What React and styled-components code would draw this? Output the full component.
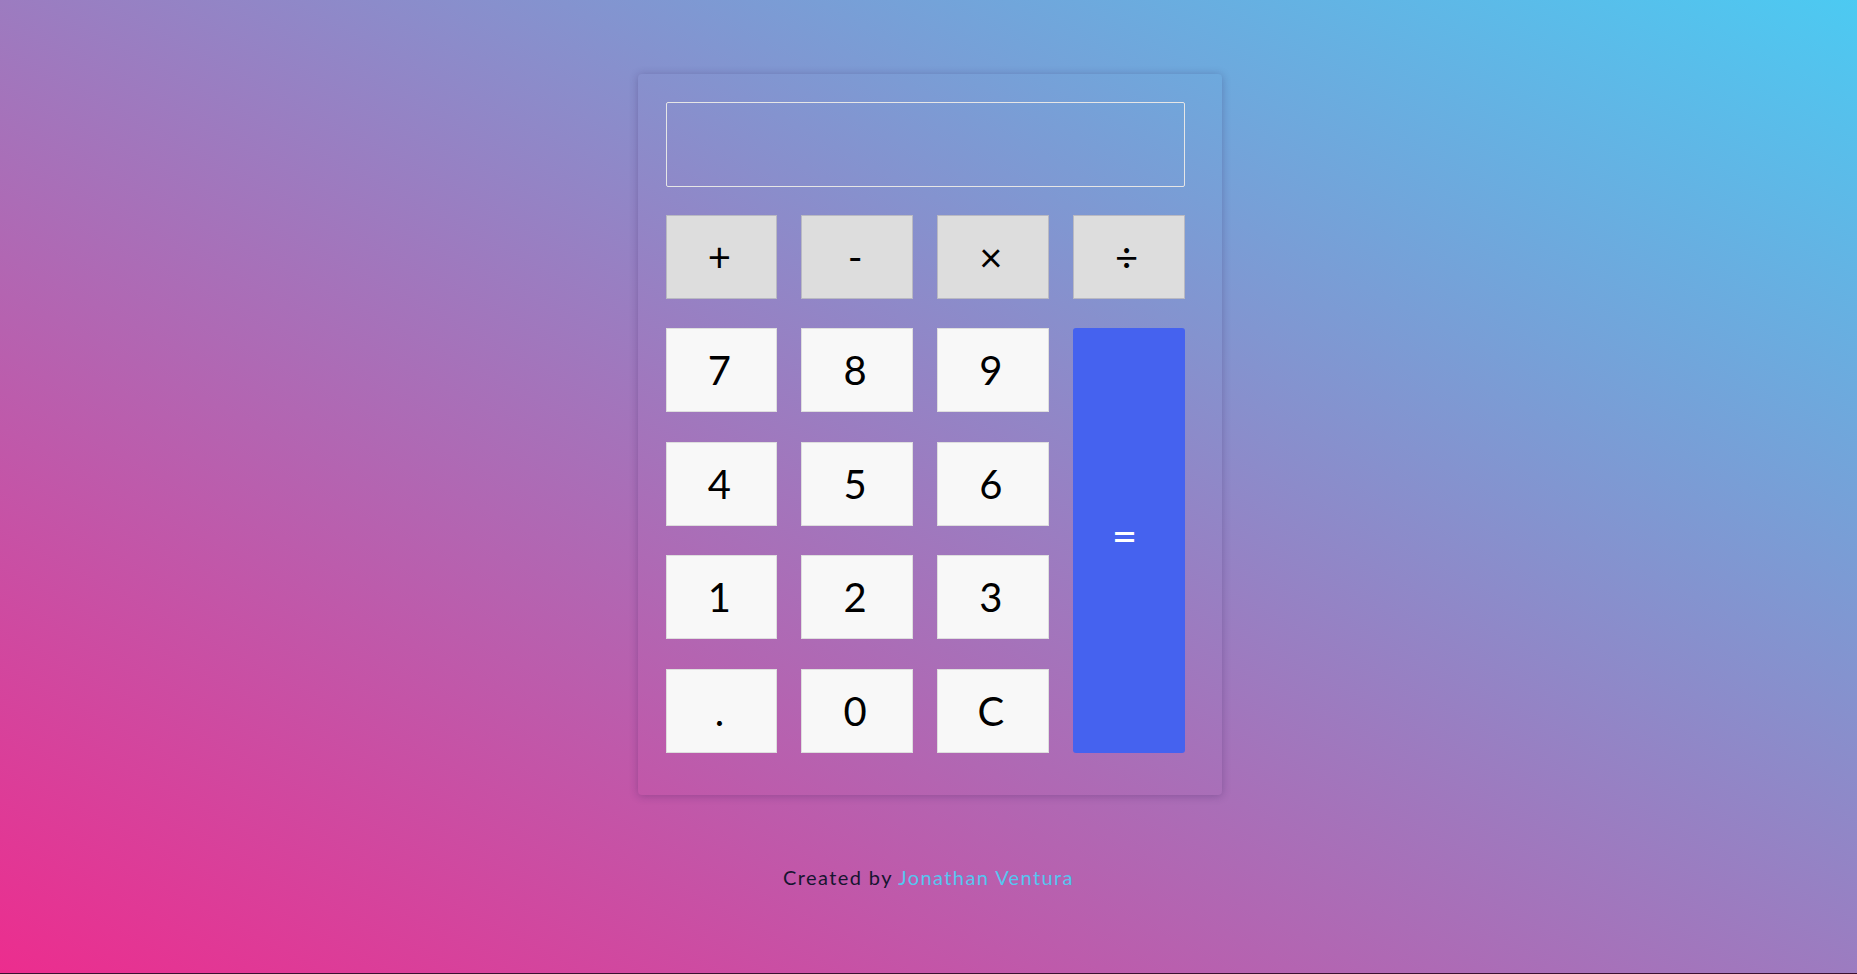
import React, { useState } from "react";
import styled, { createGlobalStyle } from "styled-components";

const Global = createGlobalStyle`
  html { background: #3a1030; }
  body { margin: 0; font-family: "Nunito", "Lato", "Noto Sans", sans-serif; }
  * { box-sizing: border-box; }
`;

const Page = styled.div`
  min-height: calc(100vh - 1px);
  background: linear-gradient(to top right, #ec2d8e 0%, #4ccaf2 100%);
  display: flex;
  flex-direction: column;
  align-items: center;
  padding-top: 74px;
`;

const Card = styled.div`
  width: 584px;
  margin-left: 2px;
  padding: 28px 37px 42px 28px;
  border-radius: 4px;
  box-shadow: 0 1px 8px rgba(40, 20, 80, 0.28);
  display: flex;
  flex-direction: column;
  gap: 28px;
`;

const Display = styled.input`
  width: 519px;
  height: 85px;
  background: transparent;
  border: 1px solid #e6e6e6;
  border-radius: 2px;
  outline: none;
  color: #fff;
  font-size: 40px;
  text-align: right;
  padding: 0 16px;
  font-family: inherit;
`;

const Keys = styled.div`
  width: 519px;
  display: grid;
  grid-template-columns: repeat(4, 1fr);
  grid-auto-rows: 84px;
  column-gap: 24px;
  row-gap: 29.4px;
`;

const Key = styled.button`
  display: flex;
  align-items: center;
  justify-content: center;
  padding: 0 4px 0 0;
  font-family: "Lato", "Noto Sans", sans-serif;
  font-weight: 400;
  font-size: 40px;
  color: #000;
  cursor: pointer;
  background: ${(p) => (p.$op ? "#dddddd" : "#f8f8f8")};
  border: 1px solid ${(p) => (p.$op ? "#b9b9c2" : "#dedede")};
  border-radius: 0;
  line-height: 1;
`;

const Equal = styled(Key)`
  grid-column: 4;
  grid-row: 2 / span 4;
  background: #4562ef;
  border: none;
  border-radius: 3px;
  color: #fff;
  font-size: 44px;
  padding: 0 8px 10px 0;
`;

const Footer = styled.p`
  margin: 70px 0 0;
  font-size: 20px;
  letter-spacing: 1.4px;
  color: #161530;
  font-family: "Lato", "Noto Sans", sans-serif;
`;

const Link = styled.a`
  color: #55c6f0;
  text-decoration: none;
`;

const rows = [
  ["7", "8", "9"],
  ["4", "5", "6"],
  ["1", "2", "3"],
  [".", "0", "C"],
];

export default function App() {
  const [value, setValue] = useState("");
  const press = (k) => {
    if (k === "C") return setValue("");
    if (k === "=") {
      try {
        const expr = value.replace(/×/g, "*").replace(/÷/g, "/");
        // eslint-disable-next-line no-new-func
        setValue(String(Function(`return (${expr})`)()));
      } catch {
        setValue("Error");
      }
      return;
    }
    setValue((v) => v + k);
  };
  return (
    <Page>
      <Global />
      <Card>
        <Display value={value} readOnly />
        <Keys>
          {["+", "-", "×", "÷"].map((o) => (
            <Key key={o} $op onClick={() => press(o)}>
              {o}
            </Key>
          ))}
          {rows.map((r) =>
            r.map((k) => (
              <Key key={k} onClick={() => press(k)}>
                {k}
              </Key>
            ))
          )}
          <Equal onClick={() => press("=")}>=</Equal>
        </Keys>
      </Card>
      <Footer>
        Created by <Link href="#">Jonathan Ventura</Link>
      </Footer>
    </Page>
  );
}
